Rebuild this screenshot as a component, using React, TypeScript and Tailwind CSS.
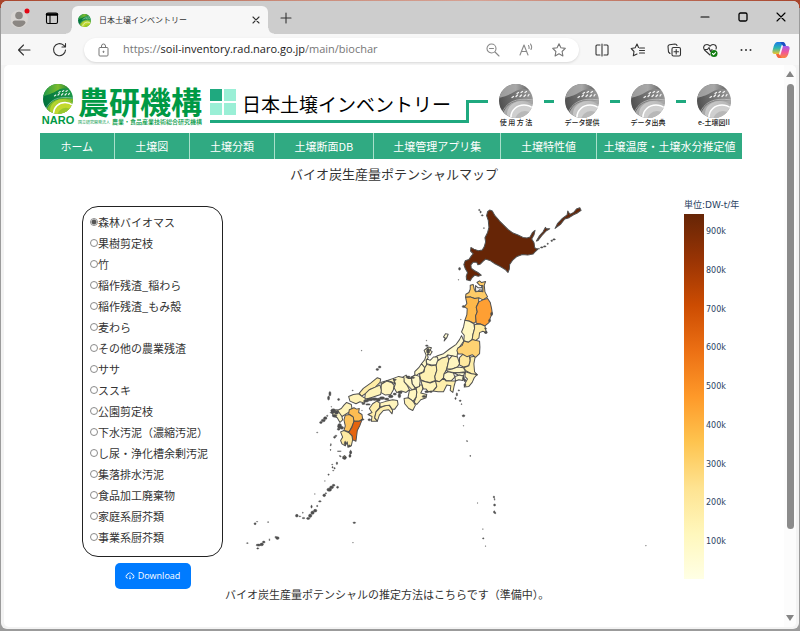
import { useState } from "react";
import type { ReactNode } from "react";
import { AiOutlineCloudDownload } from "react-icons/ai";

const NAV = ["ホーム", "土壌図", "土壌分類", "土壌断面DB", "土壌管理アプリ集", "土壌特性値", "土壌温度・土壌水分推定値"];

const GUIDES = ["使 用 方 法", "データ提供", "データ出典", "e-土壌図II"];

const MATERIALS = [
  "森林バイオマス",
  "果樹剪定枝",
  "竹",
  "稲作残渣_稲わら",
  "稲作残渣_もみ殻",
  "麦わら",
  "その他の農業残渣",
  "ササ",
  "ススキ",
  "公園剪定枝",
  "下水汚泥（濃縮汚泥）",
  "し尿・浄化槽余剰汚泥",
  "集落排水汚泥",
  "食品加工廃棄物",
  "家庭系厨芥類",
  "事業系厨芥類",
];

const TICKS = ["900k", "800k", "700k", "600k", "500k", "400k", "300k", "200k", "100k"];

type Area = { name: string; fill: string; d: string };
type Dot = [number, number, number, number];

// Hokkaido and Tohoku
const NORTH: Area[] = [
  { name: "hokkaido", fill: "#662506", d: "M180 45L188 48L196 62L210 78L222 90L235 103L250 114L265 120L280 127L292 129L301 126L308 113L316 106L313 119L306 132L313 143L315 158L324 163L316 170L310 177L294 180L278 178L262 184L250 194L240 208L239 222L235 232L228 224L212 214L196 206L183 197L168 192L160 199L152 207L145 209L141 201L131 201L124 209L125 219L134 226L145 232L155 240L146 243L136 240L128 247L122 257L111 254L110 243L114 232L107 220L103 208L107 197L118 193L125 183L131 176L123 168L124 157L133 162L146 167L158 165L164 155L168 140L166 128L174 112L178 97L176 76L171 62L174 50Z" },
  { name: "kunashiri", fill: "#662506", d: "M320 138L328 124L340 110L347 97L350 101L360 101L350 107L336 122L325 136Z" },
  { name: "etorofu", fill: "#662506", d: "M376 100L383 86L398 70L412 60L414 48L420 58L432 52L440 42L450 38L454 46L444 53L430 60L418 68L405 72L392 88Z" },
  { name: "aomori", fill: "#fecb67", d: "M122 270L131 268L134 282L138 290L150 288L160 290L160 272L150 270L142 262L150 257L156 262L168 259L164 270L166 290L174 305L160 314L148 308L135 310L122 305L108 306L109 297L118 292L122 282Z" },
  { name: "mutsu", fill: "#f4f4f4", d: "M138 288L138 271L146 278L154 278L158 272L158 286L150 284L146 288Z" },
  { name: "akita", fill: "#feb84a", d: "M108 306L122 305L135 310L148 308L147 320L140 336L143 350L138 362L140 378L133 384L120 378L106 375L112 358L113 340L104 335L112 325Z" },
  { name: "iwate", fill: "#fe9f33", d: "M148 320L160 314L174 310L182 322L186 340L188 354L182 368L178 382L166 392L152 386L140 384L138 362L143 350L140 336Z" },
  { name: "yamagata", fill: "#fff7c4", d: "M106 375L120 378L133 386L135 400L130 418L128 432L116 441L103 436L104 420L96 410L102 395Z" },
  { name: "miyagi", fill: "#feeaa1", d: "M135 388L152 386L166 392L170 412L160 408L150 412L148 428L138 436L128 432L130 418L135 400Z" },
  { name: "fukushima", fill: "#fed272", d: "M85 458L98 450L103 437L116 441L128 433L150 438L151 455L150 475L138 486L128 478L112 484L98 476L86 476L82 466Z" },
];

// Kanto and everything to the west
const WEST: Area[] = [
  { name: "niigata", fill: "#fffad0", d: "M463 32L456 16L450 28L440 42L420 56L402 70L384 76L378 80L384 90L396 84L410 80L416 74L426 76L442 82L445 62L450 50Z" },
  { name: "toyama", fill: "#fffbd4", d: "M350 84L362 90L372 80L384 80L386 92L380 104L366 104L352 100Z" },
  { name: "ishikawa", fill: "#fff9c8", d: "M344 60L356 50L366 52L362 60L368 64L362 74L354 72L356 82L350 90L352 106L346 112L336 100L346 88L350 74Z" },
  { name: "fukui", fill: "#fff8c5", d: "M336 100L346 112L342 124L328 130L318 138L304 142L316 134L316 124L328 112Z" },
  { name: "gifu", fill: "#fef1b2", d: "M346 112L352 102L366 106L380 104L382 120L376 138L378 150L362 156L348 154L334 148L330 132L344 124Z" },
  { name: "nagano", fill: "#fef0b0", d: "M384 92L396 84L410 80L414 74L418 90L414 106L410 120L404 130L402 142L390 154L378 150L376 138L382 120L380 104Z" },
  { name: "gunma", fill: "#fff5bf", d: "M418 88L428 76L444 80L450 100L444 110L428 116L412 116Z" },
  { name: "tochigi", fill: "#fee9a0", d: "M450 82L462 70L478 72L482 90L478 106L462 110L450 104Z" },
  { name: "ibaraki", fill: "#feeeaa", d: "M482 80L497 78L493 100L495 124L503 134L486 130L470 122L462 112L478 106L482 92Z" },
  { name: "saitama", fill: "#fff7c4", d: "M410 120L428 116L444 110L462 112L468 124L450 126L432 126L416 124Z" },
  { name: "tokyo", fill: "#fffbd4", d: "M432 127L450 127L466 126L462 136L446 134Z" },
  { name: "kanagawa", fill: "#fffad0", d: "M436 138L450 134L462 138L460 150L448 148L438 152Z" },
  { name: "chiba", fill: "#fff3b8", d: "M468 124L486 130L503 132L494 142L488 156L478 168L464 170L468 156L474 146L466 138Z" },
  { name: "yamanashi", fill: "#fff8c8", d: "M404 130L416 124L432 128L436 140L424 152L410 150L402 142Z" },
  { name: "shizuoka", fill: "#feeeab", d: "M378 152L390 154L402 144L410 152L424 152L438 152L434 166L430 186L422 180L424 166L412 164L402 184L386 184L370 182L380 172Z" },
  { name: "aichi", fill: "#fff4bb", d: "M334 150L348 154L362 158L378 152L382 168L370 182L356 184L350 176L342 176L338 164Z" },
  { name: "mie", fill: "#fff4bb", d: "M330 164L338 164L340 176L334 188L352 192L350 202L334 208L322 222L314 216L320 200L322 184L320 174Z" },
  { name: "shiga", fill: "#fff9cb", d: "M306 140L318 134L330 138L332 152L330 168L318 172L308 160Z" },
  { name: "kyoto", fill: "#fff7c4", d: "M280 140L290 134L296 144L306 144L308 160L318 174L308 178L296 166L284 154Z" },
  { name: "nara", fill: "#fff6c0", d: "M300 180L310 178L320 176L322 186L320 200L312 212L300 206L296 200Z" },
  { name: "wakayama", fill: "#fff2b5", d: "M284 204L296 202L306 208L312 214L318 224L310 240L298 234L286 220Z" },
  { name: "hyogo", fill: "#fff6c0", d: "M252 144L268 138L284 142L284 154L294 166L300 178L290 186L276 182L262 186L254 172L258 160Z" },
  { name: "tottori", fill: "#fff5bd", d: "M214 156L234 150L252 144L256 160L246 154L232 150L216 162Z" },
  { name: "okayama", fill: "#fff5bf", d: "M216 162L232 152L246 156L254 164L252 178L244 192L228 194L214 186Z" },
  { name: "shimane", fill: "#feeca6", d: "M150 188L162 174L184 158L204 142L214 146L212 156L198 170L180 178L168 190L156 198Z" },
  { name: "hiroshima", fill: "#fef3b8", d: "M168 190L180 178L198 170L212 164L216 180L214 192L196 198L178 204L166 206Z" },
  { name: "yamaguchi", fill: "#fff3b8", d: "M118 198L132 192L148 190L158 198L168 204L166 218L152 214L140 220L122 212Z" },
  { name: "ehime", fill: "#feeeab", d: "M180 234L190 220L202 212L212 218L210 232L200 244L196 262L204 272L186 272L188 258L176 252L188 246Z" },
  { name: "kochi", fill: "#feefad", d: "M212 232L226 226L240 224L250 240L248 250L238 238L222 240L210 254L204 272L196 262L200 244Z" },
  { name: "tokushima", fill: "#fff5bd", d: "M212 218L232 212L250 208L264 210L266 222L256 236L248 236L240 224L226 226L212 230Z" },
  { name: "fukuoka", fill: "#fff4ba", d: "M84 240L96 234L104 224L112 216L126 222L128 234L120 244L108 252L98 258L88 252Z" },
  { name: "saga", fill: "#fff7c4", d: "M66 240L84 238L98 258L100 268L92 276L84 262L72 256Z" },
  { name: "oita", fill: "#fdbc52", d: "M120 238L134 232L142 236L150 234L148 246L158 252L160 266L150 272L134 272L130 258L118 250Z" },
  { name: "kumamoto", fill: "#fdc35c", d: "M108 254L120 252L132 260L134 274L128 288L120 304L104 300L108 286L104 268Z" },
  { name: "miyazaki", fill: "#e5640f", d: "M134 272L150 272L158 268L152 284L144 300L140 332L130 328L128 316L118 306L128 290Z" },
  { name: "kagoshima", fill: "#feeaa2", d: "M94 304L104 300L118 306L128 316L130 328L126 346L116 350L114 334L108 346L98 340L94 330L100 320Z" },
  { name: "sado", fill: "#fffad0", d: "M404 32L407 23L402 20L408 10L416 12L412 22Z" },
  { name: "yakushima", fill: "#feeaa2", d: "M101 378L106 375L111 380L107 385L101 384Z" },
];

const NORTH_DOTS: Dot[] = [
  [149, 45, 2, 2], [153, 51, 2, 3], [158, 61, 3, 2], [163, 99, 2, 1], [90, 221, 3, 4], [87, 254, 1, 1],
  [326, 161, 4, 1], [336, 157, 4, 2], [345, 154, 4, 2], [354, 146, 2, 2], [366, 137, 3, 2], [373, 133, 4, 2],
  [102, 334, 4, 3], [94, 373, 1, 1], [168, 400, 3, 2], [169, 412, 4, 3], [186, 356, 3, 5], [180, 376, 3, 4],
];

const WEST_DOTS: Dot[] = [
  [204, 117, 4, 3], [211, 110, 4, 3], [157, 61, 1, 1], [351, 31, 1, 1], [130, 180, 2, 1],
  [62, 190, 3, 7], [58, 203, 3, 6], [88, 207, 3, 3], [66, 229, 1, 1], [72, 240, 7, 5], [82, 246, 6, 5],
  [76, 256, 7, 4], [70, 246, 7, 3], [48, 263, 5, 4], [42, 270, 6, 4], [35, 276, 4, 3], [54, 256, 2, 2],
  [24, 306, 2, 1], [91, 287, 6, 8], [98, 292, 5, 4], [88, 296, 4, 3], [76, 320, 3, 3], [80, 316, 3, 2],
  [64, 345, 1, 1], [64, 358, 1, 1], [90, 362, 6, 1], [124, 366, 3, 5], [122, 376, 2, 4], [94, 378, 2, 1],
  [108, 338, 3, 6], [120, 346, 4, 3], [160, 267, 4, 2], [180, 268, 4, 3],
  [170, 212, 8, 3], [181, 207, 10, 4], [196, 206, 8, 4], [207, 208, 6, 5], [218, 203, 8, 4], [232, 206, 7, 3],
  [244, 198, 7, 4], [256, 191, 5, 3], [272, 186, 6, 4], [270, 196, 4, 6], [176, 222, 7, 2], [162, 220, 5, 2],
  [158, 240, 1, 1], [256, 148, 5, 2], [296, 140, 7, 3], [310, 142, 6, 2], [356, 62, 5, 8], [352, 46, 4, 2],
  [352, 184, 6, 3], [364, 184, 5, 2], [344, 198, 6, 3], [462, 144, 3, 5], [466, 150, 3, 4], [466, 164, 3, 4],
  [448, 180, 2, 2], [442, 192, 2, 5], [438, 204, 2, 3], [452, 211, 3, 2], [456, 221, 2, 1], [462, 256, 4, 3],
  [462, 286, 1, 1], [473, 332, 1, 1], [482, 376, 1, 1], [528, 5, 4, 4], [500, 132, 3, 2],
];

const SOUTH_DOTS: Dot[] = [
  [305, 12, 1, 3], [304, 28, 1, 1], [332, 46, 2, 1], [346, 52, 5, 4], [364, 34, 2, 5], [362, 46, 3, 4],
  [309, 72, 2, 1], [310, 80, 2, 2], [323, 68, 2, 4], [316, 83, 2, 2], [312, 90, 2, 1], [298, 102, 2, 2],
  [287, 121, 1, 1], [313, 134, 4, 3], [307, 140, 6, 4], [300, 147, 7, 5], [325, 140, 3, 3], [285, 164, 4, 4],
  [290, 158, 2, 2], [257, 160, 1, 1], [272, 182, 4, 2], [264, 196, 2, 2], [247, 198, 2, 4], [258, 210, 5, 4],
  [250, 216, 5, 5], [243, 225, 5, 5], [237, 233, 5, 3], [223, 232, 4, 2], [221, 216, 1, 2], [203, 225, 4, 4],
  [212, 227, 3, 1], [78, 249, 3, 3], [84, 243, 2, 1], [117, 244, 2, 1], [145, 292, 5, 4], [140, 289, 3, 2],
  [121, 297, 1, 3], [104, 304, 4, 3], [98, 311, 5, 4], [88, 313, 7, 3], [86, 323, 3, 2], [55, 307, 3, 1],
  [375, 246, 4, 2], [371, 306, 1, 1], [722, 46, 1, 1], [712, 1, 1, 1], [744, 187, 1, 1], [793, 169, 2, 3],
  [795, 176, 1, 3], [795, 193, 3, 3], [794, 214, 2, 4], [797, 217, 2, 2], [760, 265, 1, 1], [761, 293, 2, 2],
  [768, 316, 1, 1], [1248, 315, 1, 1],
];

function Areas({ areas, dots }: { areas: Area[]; dots: Dot[] }) {
  return (
    <>
      {areas.map((a) => (
        <path key={a.name} d={a.d} fill={a.fill} stroke="#505050" strokeWidth="3" strokeLinejoin="round" />
      ))}
      {dots.map(([x, y, rx, ry], i) => (
        <ellipse key={i} cx={x} cy={y} rx={rx} ry={ry} fill="#4d4d4d" stroke="#4d4d4d" strokeWidth="1.4" />
      ))}
    </>
  );
}

function JapanMap() {
  return (
    <svg viewBox="224 200 436 352" className="block w-full" role="img" aria-label="バイオ炭生産量ポテンシャルマップ">
      <g transform="translate(310 330) scale(.3333)"><Areas areas={WEST} dots={WEST_DOTS} /></g>
      <g transform="translate(430 195) scale(.3333)"><Areas areas={NORTH} dots={NORTH_DOTS} /></g>
      <g transform="translate(230 440) scale(.3333)"><Areas areas={[]} dots={SOUTH_DOTS} /></g>
    </svg>
  );
}

// Globe mark of the institute, green in the logo and grey in the guide links
function Ball({ id, tones, className }: { id: string; tones: string[]; className: string }) {
  return (
    <svg viewBox="0 0 34 34" className={className} aria-hidden="true">
      <defs>
        <clipPath id={`${id}-c`}><circle cx="17" cy="17" r="17" /></clipPath>
        <linearGradient id={`${id}-g`} x1="0" y1="0.6" x2="1" y2="0.3">
          <stop offset="0" stopColor={tones[0]} />
          <stop offset="1" stopColor={tones[1]} />
        </linearGradient>
        <linearGradient id={`${id}-t`} x1="0" y1="0" x2="1" y2="0">
          <stop offset="0" stopColor={tones[1]} />
          <stop offset=".5" stopColor={tones[2]} />
          <stop offset="1" stopColor={tones[0]} />
        </linearGradient>
        <linearGradient id={`${id}-y`} x1="0" y1="0" x2="1" y2="0.6">
          <stop offset="0" stopColor={tones[3]} />
          <stop offset="1" stopColor={tones[2]} />
        </linearGradient>
      </defs>
      <g clipPath={`url(#${id}-c)`}>
        <rect width="34" height="34" fill={`url(#${id}-g)`} />
        <path d="M0 14C7 12 10 11 15 8S26 3 34 8V-2H0Z" fill={`url(#${id}-t)`} />
        <path d="M4 30C7 20 16 14 34 17V20C20 17 12 21 8 33Z" fill={tones[2]} />
        <path d="M3 29C7 19 16 13 34 16" fill="none" stroke="#fff" strokeWidth="0.6" opacity=".7" />
        <g stroke="#fff" strokeWidth="1.3" strokeLinecap="round" opacity=".9">
          <path d="M13 13.500L14.500 12.500M17 12.500L18.500 11M21 12.500L22.500 11M25 12.500L26.500 11M18 9.500L19.500 8.500M22 8.500L23.500 7.500M26 8.500L27.500 7.500M29 12L30 10.500" />
        </g>
        <ellipse cx="23" cy="30" rx="15" ry="13" fill={`url(#${id}-y)`} />
        <ellipse cx="25" cy="33" rx="13" ry="12" fill={tones[3]} stroke="#fff" strokeWidth="1.6" />
        <ellipse cx="26" cy="37" rx="10" ry="10" fill={tones[2]} opacity=".6" />
      </g>
    </svg>
  );
}

const GREEN = ["#00713c", "#1f9a4b", "#7dbb2c", "#c3d92e"];
const GREY = ["#4f4f4f", "#9a9a9a", "#a8a8a8", "#cfcfcf"];

function IconButton({ label, children, color = "text-[#333333]" }: { label: string; children: ReactNode; color?: string }) {
  return (
    <button type="button" aria-label={label} className={`flex size-4 shrink-0 items-center justify-center ${color}`}>
      <svg viewBox="0 0 16 16" className="size-4" fill="none" stroke="currentColor" strokeWidth="1.1" strokeLinecap="round" strokeLinejoin="round">
        {children}
      </svg>
    </button>
  );
}

function TabBar() {
  return (
    <div className="flex h-[33px] items-stretch bg-[#cdcdcd]">
      <div className="flex items-center gap-[13px] pl-2.5">
        <button type="button" aria-label="プロファイル" className="size-5">
          <svg viewBox="0 0 20 20" className="size-5">
            <circle cx="8" cy="11" r="9" fill="#d8d5d2" />
            <circle cx="8" cy="7.500" r="3.800" fill="#8b8783" />
            <path d="M1.500 15Q1.500 12.500 4 12.500H12Q14.500 12.500 14.500 15Q12 19 8 19T1.500 15Z" fill="#8b8783" />
            <circle cx="16" cy="3" r="2.500" fill="#e30613" />
          </svg>
        </button>
        <IconButton label="タブ操作メニュー" color="text-black">
          <rect x="2.500" y="3" width="11" height="10.500" rx="1.500" />
          <path d="M3 4.500H13" strokeWidth="2.400" />
          <path d="M6 5V13" />
        </IconButton>
      </div>
      <div className="ml-1.5 size-1.5 self-end bg-[radial-gradient(circle_at_0_0,#cdcdcd_5px,#f7f7f7_6px)]" />
      <div className="mt-[5px] flex w-[196px] items-center gap-2 rounded-t-[6px] bg-[#f7f7f7] pr-1 pl-1.5">
        <Ball id="tab" tones={GREEN} className="size-[13px] shrink-0" />
        <span className="flex-1 text-[8px] whitespace-nowrap text-[#333333]">日本土壌インベントリー</span>
        <IconButton label="タブを閉じる">
          <path d="M5 5L11 11M11 5L5 11" />
        </IconButton>
      </div>
      <div className="size-1.5 self-end bg-[radial-gradient(circle_at_100%_0,#cdcdcd_5px,#f7f7f7_6px)]" />
      <div className="flex flex-1 items-center pl-1">
        <IconButton label="新しいタブ">
          <path d="M8 3V13M3 8H13" />
        </IconButton>
      </div>
      <div className="flex items-center gap-[22px] pr-2.5 pb-0.5">
        <IconButton label="最小化" color="text-black"><path d="M4 8H12" /></IconButton>
        <IconButton label="最大化" color="text-black"><rect x="4" y="4" width="8" height="8" rx="1.500" strokeWidth="1.300" /></IconButton>
        <IconButton label="閉じる" color="text-black"><path d="M4 4L12 12M12 4L4 12" /></IconButton>
      </div>
    </div>
  );
}

function Toolbar() {
  return (
    <div className="flex h-[31px] items-center bg-[#f7f7f7] pr-2 pl-[15px]">
      <div className="flex gap-5">
        <IconButton label="戻る"><path d="M14 8H2.500M7.500 3L2.500 8L7.500 13" /></IconButton>
        <IconButton label="更新"><path d="M13.500 8A6 6 0 1 1 11.500 3.200L13.500 5M13.500 1.500V5H10" /></IconButton>
      </div>
      <div className="ml-4 flex h-6 flex-1 items-center rounded-full bg-white pr-3 pl-3 shadow-sm">
        <svg viewBox="0 0 16 16" className="size-4" fill="none" stroke="#777" strokeWidth="1">
          <rect x="3" y="5.500" width="9" height="8.500" rx="1" />
          <path d="M5.500 5.500V4A2 2 0 0 1 9.500 4V5.500" />
          <circle cx="7.500" cy="9.800" r="0.600" fill="#777" />
        </svg>
        <div className="ml-[11px] flex-1 font-['Open_Sans',sans-serif] text-[11px] whitespace-nowrap text-[#767676]">
          https://<span className="text-[#1b1b1b]">soil-inventory.rad.naro.go.jp</span>/main/biochar
        </div>
        <div className="flex gap-[17px]">
          <IconButton label="ズーム" color="text-[#888888]">
            <circle cx="6.500" cy="6.500" r="4.500" /><path d="M10 10L14 14M4.500 6.500H8.500" />
          </IconButton>
          <IconButton label="音声で読み上げる" color="text-[#888888]">
            <path d="M2 13L6 3L10 13M3.500 9.500H8.500M10.500 3.500Q11.500 5 11 6.500M12.500 2Q14.500 4.500 13 7.500" />
          </IconButton>
          <IconButton label="お気に入りに追加" color="text-[#777777]">
            <path d="M8 1.800L9.900 5.800L14.300 6.400L11.100 9.500L11.900 13.900L8 11.800L4.100 13.900L4.900 9.500L1.700 6.400L6.100 5.800Z" />
          </IconButton>
        </div>
      </div>
      <div className="ml-[15px] flex gap-5">
        <IconButton label="画面を分割する">
          <path d="M6 3H3Q2 3 2 4V12Q2 13 3 13H6M10 3H13Q14 3 14 4V12Q14 13 13 13H10M8 2V14" />
        </IconButton>
        <IconButton label="お気に入り">
          <path d="M8.500 5.500L7 2L5.200 5.800L1.200 6.500L4 9.500L3.300 13.800L7 12M9.500 6H14.500M9.500 8.500H14.500M9.500 11H14.500" />
        </IconButton>
        <IconButton label="コレクション">
          <rect x="6" y="5.500" width="8.500" height="8.500" rx="1.500" />
          <path d="M10.200 7.500V12M8 9.800H12.500M4 11.500L2.500 10L2 4.500Q2 3 3.500 2.700L9 2Q10.500 2 11 3.500" />
        </IconButton>
        <IconButton label="ブラウザーのエッセンシャル">
          <path d="M8 13L2.500 8Q0.500 5 3 3Q6 1.500 8 4.200Q10 1.500 13 3Q15 4.500 14 7M3 7.500H5.500L7 5.500L8.500 9.500L10 7.500" />
          <circle cx="12" cy="11.500" r="3.500" fill="#107c10" stroke="none" />
          <path d="M10.500 11.500L11.600 12.600L13.500 10.600" stroke="#fff" />
        </IconButton>
        <IconButton label="設定など">
          <g fill="currentColor" stroke="none"><circle cx="3.500" cy="8" r="1" /><circle cx="8" cy="8" r="1" /><circle cx="12.500" cy="8" r="1" /></g>
        </IconButton>
      </div>
      <button type="button" aria-label="Copilot" className="ml-[17px] size-5">
        <svg viewBox="0 0 20 20" className="size-5">
          <defs>
            <linearGradient id="cp-a" x1="0" y1="0" x2="0" y2="1">
              <stop offset="0" stopColor="#1b78e8" /><stop offset=".5" stopColor="#2bb7b0" /><stop offset="1" stopColor="#f0c42c" />
            </linearGradient>
            <linearGradient id="cp-b" x1="0" y1="0" x2="0" y2="1">
              <stop offset="0" stopColor="#a35cf0" /><stop offset=".5" stopColor="#f0569a" /><stop offset="1" stopColor="#fb8a3c" />
            </linearGradient>
          </defs>
          <path d="M6 2H13Q11 3 10 7L8 14H4Q0 14 2 9Q3 3 6 2Z" fill="url(#cp-a)" />
          <path d="M14 18H7Q9 17 10 13L12 6H16Q20 6 18 11Q17 17 14 18Z" fill="url(#cp-b)" />
          <path d="M9 2H12Q14 2 15 6H12Q10 3 9 2Z" fill="#1b4fc4" />
          <path d="M11 18H8Q6 18 5 14H8Q10 17 11 18Z" fill="#f4643c" />
        </svg>
      </button>
    </div>
  );
}

function SiteHeader() {
  return (
    <header className="flex h-[42px] items-start">
      <a href="#naro" className="flex gap-0.5 text-[#009944]">
        <span className="flex w-9 flex-col items-center">
          <Ball id="naro" tones={GREEN} className="size-[30px]" />
          <span className="font-['Liberation_Sans',sans-serif] text-[11px] leading-3 font-bold">NARO</span>
        </span>
        <span className="flex flex-col">
          <span className="text-[31px] leading-[34px] font-bold">農研機構</span>
          <span className="flex items-center justify-between leading-2 whitespace-nowrap">
            <span className="text-[4px]">国立研究開発法人</span>
            <span className="text-[6px] font-medium">農業・食品産業技術総合研究機構</span>
          </span>
        </span>
      </a>
      <div className="ml-2 flex h-[39px] flex-1 items-center gap-1.5 border-b-[3px] border-[#1fa97f]">
        <div className="grid grid-cols-2 gap-0.5">
          <span className="size-3 bg-[#1fa97f]" />
          <span className="size-3 bg-[#9aefd6]" />
          <span className="size-3 bg-[#9aefd6]" />
          <span className="size-3 bg-[#9aefd6]" />
        </div>
        <h1 className="pt-1 text-[19px] leading-7 whitespace-nowrap text-black">日本土壌インベントリー</h1>
      </div>
      <div className="mt-4 h-[23px] w-[22px] border-t-[3px] border-l-[3px] border-[#1fa97f]" />
      <nav aria-label="ガイド" className="flex">
        {GUIDES.map((g, i) => (
          <div key={g} className="flex">
            {i > 0 && <span className="mt-4 h-[3px] w-2.5 bg-[#1fa97f]" />}
            <a href={`#guide-${i}`} className="flex w-14 flex-col items-center">
              <Ball id={`guide${i}`} tones={GREY} className="size-[34px]" />
              <span className="text-[7px] leading-2 font-medium whitespace-nowrap text-[#222222]">{g}</span>
            </a>
          </div>
        ))}
      </nav>
    </header>
  );
}

export default function App() {
  const [material, setMaterial] = useState(MATERIALS[0]);

  return (
    <div lang="ja" className="flex min-h-screen flex-col bg-[#9b9b9b] bg-[linear-gradient(90deg,#a8452c,#c98a78_35%,#d6a294_60%,#a8452c)] bg-[length:100%_8px] bg-no-repeat px-px pt-px pb-0.5 font-['Noto_Sans_CJK_JP',sans-serif]">
      <div className="flex flex-1 flex-col overflow-hidden rounded-[6px] bg-[#f3f3f3]">
        <TabBar />
        <Toolbar />

        <div className="mx-[3px] mb-0.5 flex flex-1 overflow-hidden rounded-[5px] bg-white">
          <main className="min-w-0 flex-1 pt-[19px] pb-3">
            <div className="pr-[42px] pl-9">
              <SiteHeader />
              <nav aria-label="メイン" className="mt-[7px] grid grid-cols-[74fr_75fr_84fr_99fr_127fr_95fr_146fr] gap-px bg-[#a9e0cb]">
                {NAV.map((n) => (
                  <a key={n} href={`#${n}`} className="bg-[#30aa82] text-center text-[11px] leading-[26px] whitespace-nowrap text-white">{n}</a>
                ))}
              </nav>
            </div>

            <h2 className="mt-[5px] text-center text-[13px] leading-5 text-[#333333]">バイオ炭生産量ポテンシャルマップ</h2>

            <div className="mt-4 flex items-start pr-[39px] pl-[78px]">
              <div className="flex w-[141px] shrink-0 flex-col items-center pt-1.5">
                <div role="radiogroup" aria-label="バイオマスの種類" className="w-full rounded-[16px] border border-[#222222] pt-1 pb-[9px] pl-[7px]">
                  {MATERIALS.map((m) => (
                    <label key={m} className="flex h-[21px] items-center text-[11px] leading-4 whitespace-nowrap text-[#333333]">
                      <input
                        type="radio"
                        name="material"
                        checked={material === m}
                        onChange={() => setMaterial(m)}
                        className="size-2 shrink-0 appearance-none rounded-full border border-[#8a8a8a] bg-white checked:bg-[radial-gradient(circle,#555555_2px,#ffffff_3px)]"
                      />
                      {m}
                    </label>
                  ))}
                </div>
                <button type="button" className="mt-1.5 flex h-[26px] w-[76px] items-center justify-center gap-[3px] rounded-[5px] bg-[#007bff] font-['Open_Sans',sans-serif] text-[9px] text-white">
                  <AiOutlineCloudDownload size={10} />
                  Download
                </button>
              </div>

              <div className="min-w-0 flex-1">
                <JapanMap />
                <p className="mt-[33px] pl-0.5 text-[11px] leading-4 whitespace-nowrap text-[#333333]">
                  バイオ炭生産量ポテンシャルの推定方法はこちらです（準備中）。
                </p>
              </div>

              <div className="ml-6 w-[61px] shrink-0 font-['DejaVu_Sans','Noto_Sans_CJK_JP',sans-serif] text-[#2a3f5f]">
                <p className="h-3.5 text-[9px] leading-[10px] whitespace-nowrap">単位:DW-t/年</p>
                <div className="flex h-[365px] gap-0.5">
                  <div className="w-5 bg-[linear-gradient(to_top,#ffffe5,#fff7bc,#fee391,#fec44f,#fe9929,#ec7014,#cc4c02,#993404,#662506)]" />
                  <ul className="flex flex-col pb-4 text-[8px] leading-3">
                    {TICKS.map((t) => (
                      <li key={t} className="flex-1 pt-3">{t}</li>
                    ))}
                  </ul>
                </div>
              </div>
            </div>
          </main>

          <div aria-hidden="true" className="flex w-3 shrink-0 flex-col items-center bg-[#fcfcfc] py-1.5">
            <svg viewBox="0 0 8 6" className="h-1.5 w-2"><path d="M4 0L8 6H0Z" fill="#858585" /></svg>
            <div className="mt-[7px] w-[7px] flex-[443] rounded-full bg-[#8b8b8b]" />
            <div className="flex-[86]" />
            <svg viewBox="0 0 8 6" className="h-1.5 w-2"><path d="M0 0H8L4 6Z" fill="#858585" /></svg>
          </div>
        </div>
      </div>
    </div>
  );
}
